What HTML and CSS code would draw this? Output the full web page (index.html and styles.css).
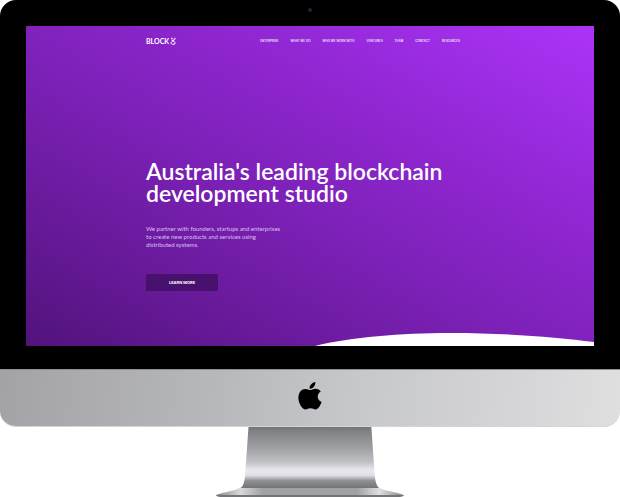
FILE: index.html
```html
<!DOCTYPE html>
<html lang="en">
<head>
<meta charset="utf-8">
<meta name="viewport" content="width=device-width, initial-scale=1">
<title>Block8</title>
<link rel="stylesheet" href="styles.css">
</head>
<body>
<div class="computer">
  <div class="bezel">
    <span class="camera"></span>
    <div class="screen">
      <header class="header">
        <a class="brand" href="#">BLOCK
          <svg class="brand-mark" viewBox="0 0 12 16" aria-label="8" role="img"><path d="M2 2L7 4.500M10 1.500C11.500 5 7 7 4 9C1 11 1.500 14 5 14.500H8C11 14 11.500 11 8 9L3 6"/></svg>
        </a>
        <nav class="nav">
          <a href="#">ENTERPRISE</a>
          <a href="#">WHAT WE DO</a>
          <a href="#">WHO WE WORK WITH</a>
          <a href="#">VENTURES</a>
          <a href="#">TEAM</a>
          <a href="#">CONTACT</a>
          <a href="#">RESOURCES</a>
        </nav>
      </header>
      <main class="hero">
        <h1>Australia's leading blockchain<br>development studio</h1>
        <p>We partner with founders, startups and enterprises<br>to create new products and services using<br>distributed systems.</p>
        <button class="cta" type="button">LEARN MORE</button>
      </main>
      <svg class="wave" viewBox="0 0 568 14" aria-hidden="true"><path d="M289 14C325 5 375 1 424 1C480 1 530 5 568 10V14Z"/></svg>
    </div>
  </div>
  <div class="chin">
    <svg class="apple" viewBox="0 0 24 29" role="img" aria-label="Apple"><path d="M17.500 0C17.800 4 15 7 11.600 7C11.300 3.500 14.300 .5 17.500 0ZM12.200 8.400C13.500 8.400 15 7 17.800 7C20 7 22 8 23.200 9.900C18.500 12.500 19.200 19 24 20.700C22.900 24 20.500 28.500 17.700 28.500C15.700 28.500 15 27.300 12.500 27.300C10 27.300 9.200 28.500 7.400 28.500C4 28.500 0 22 0 16.500C0 10.500 3.500 7.200 7.200 7.200C9.500 7.200 11 8.400 12.200 8.400Z"/></svg>
  </div>
  <svg class="stand" viewBox="0 0 188 71" aria-hidden="true">
    <defs>
      <linearGradient id="neck" x1="0" y1="0" x2="0" y2="1">
        <stop offset="0" stop-color="#737477"/>
        <stop offset=".08" stop-color="#828386"/>
        <stop offset=".35" stop-color="#9fa0a3"/>
        <stop offset=".57" stop-color="#bfc0c3"/>
        <stop offset=".7" stop-color="#e7e6ec"/>
        <stop offset=".79" stop-color="#e2e1e7"/>
        <stop offset=".88" stop-color="#909194"/>
        <stop offset="1" stop-color="#737477"/>
      </linearGradient>
      <linearGradient id="base" x1="0" y1="0" x2="1" y2="0">
        <stop offset="0" stop-color="#85868a"/>
        <stop offset=".13" stop-color="#d9d9dd"/>
        <stop offset=".25" stop-color="#a0a1a4"/>
        <stop offset=".75" stop-color="#a0a1a4"/>
        <stop offset=".87" stop-color="#e0e0e3"/>
        <stop offset="1" stop-color="#85868a"/>
      </linearGradient>
    </defs>
    <path fill="url(#base)" d="M25 60H162C167 64 181 65 188 68H0C7 65 21 64 25 60Z"/>
    <path fill="url(#neck)" d="M32.500 0H155.500L159 50C159.500 55 161 59 163 61H25C27 59 28.500 55 29 50Z"/>
    <path fill="#737477" d="M0 68H188Q188 70 181 70H7Q0 70 0 68Z"/>
    <path fill="#c9cacd" d="M12 70H176V71H12Z"/>
  </svg>
</div>
</body>
</html>
```

FILE: styles.css
```css
* {
  box-sizing: border-box;
}

body {
  margin: 0;
  background: #fff;
  font-family: Lato, "Liberation Sans", sans-serif;
}

a {
  color: inherit;
  text-decoration: none;
}

.computer {
  display: flex;
  flex-direction: column;
  align-items: center;
}

.bezel {
  position: relative;
  width: 100%;
  padding: 26px 26px 23px;
  background: #000;
  border-radius: 16px 16px 0 0;
}

.camera {
  position: absolute;
  top: 8px;
  left: 50%;
  width: 4px;
  height: 4px;
  margin-left: -2px;
  border-radius: 50%;
  background: #2a1b3c;
}

.screen {
  position: relative;
  display: flex;
  flex-direction: column;
  aspect-ratio: 568 / 320;
  padding: 11px 120px 0;
  background: linear-gradient(to top right, #52137c 0%, #7a20b4 42%, #8b25cb 62%, #ac33f8 100%);
  color: #fff;
}

.header {
  display: flex;
  align-items: center;
  justify-content: space-between;
  height: 8px;
  max-width: 314px;
}

.brand {
  display: flex;
  align-items: center;
  gap: 1px;
  font-size: 7px;
  font-weight: 700;
  line-height: 8px;
}

.brand-mark {
  width: 6px;
  height: 8px;
  fill: none;
  stroke: #fff;
  stroke-width: 2;
}

.nav {
  display: flex;
  gap: 12px;
  font-family: Inter, "Liberation Sans", sans-serif;
  font-size: 3px;
  font-weight: 500;
  line-height: 4px;
  white-space: nowrap;
}

.hero {
  display: flex;
  flex-direction: column;
  align-items: flex-start;
  margin-top: 115px;
  white-space: nowrap;
}

h1 {
  margin: 0;
  font-size: 23px;
  font-weight: 600;
  line-height: 22px;
}

.hero p {
  margin: 21px 0 0;
  color: #dcc0ef;
  font-size: 6px;
  line-height: 8px;
}

.cta {
  width: 72px;
  height: 17px;
  margin-top: 25px;
  padding: 0;
  border: 0;
  border-radius: 1px;
  background: #48116d;
  color: #fff;
  font-family: Inter, "Liberation Sans", sans-serif;
  font-size: 4px;
  font-weight: 700;
}

.wave {
  position: absolute;
  bottom: 0;
  left: 0;
  width: 100%;
  fill: #fff;
}

.chin {
  display: flex;
  justify-content: center;
  width: 100%;
  padding: 12px 0 16px;
  border-top: 1px solid #8f8f92;
  border-bottom: 1px solid #d5d5d8;
  border-radius: 0 0 16px 16px;
  background: linear-gradient(95deg, #a3a3a7 0%, #b7b8bc 35%, #c7c8cb 58%, #d6d6d8 85%, #dfdfe0 100%);
}

.apple {
  width: 24px;
  height: 28px;
  fill: #000;
}

.stand {
  width: 30.3%;
}
```
